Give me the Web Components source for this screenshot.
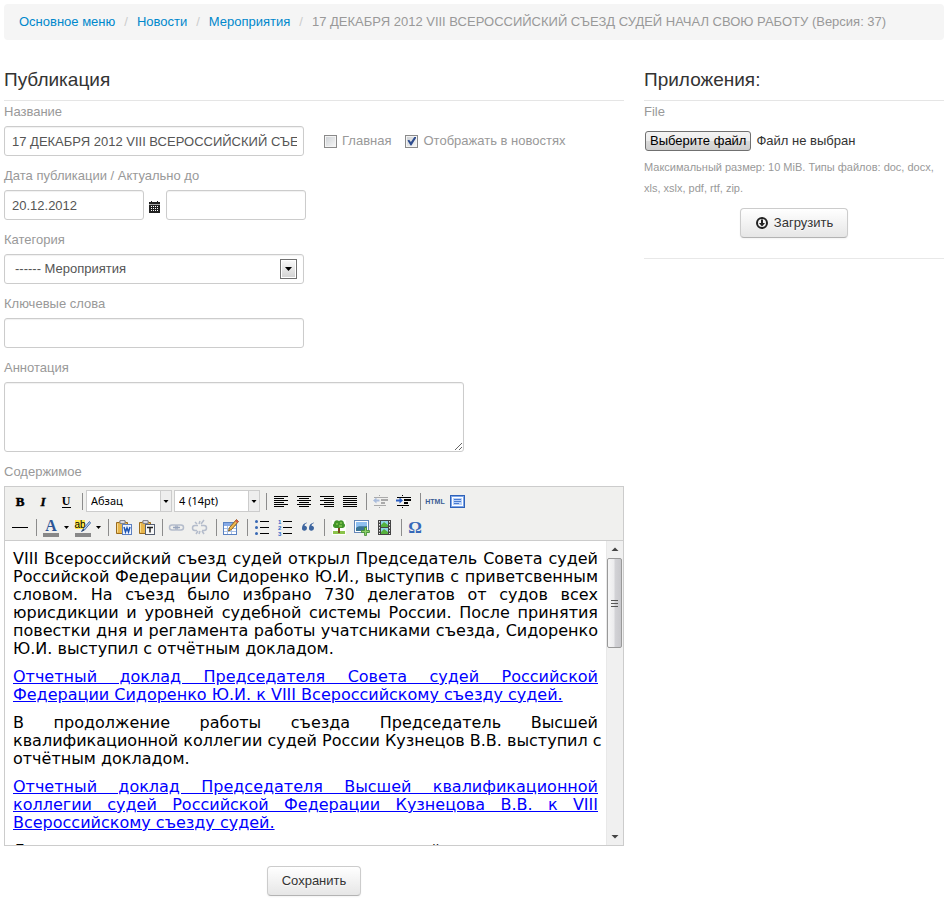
<!DOCTYPE html>
<html lang="ru">
<head>
<meta charset="utf-8">
<title>Публикация</title>
<style>
  body { margin: 0; background: #fff; color: #333; font: 13px/20px "Liberation Sans", Arial, sans-serif; }
</style>
</head>
<body>
<publication-page></publication-page>

<script>
class Base extends HTMLElement {
  connectedCallback() {
    if (this.shadowRoot) return;
    const t = document.createElement('template');
    t.innerHTML = '<style>*{box-sizing:border-box}:host{display:block}</style>' + this.render();
    this.attachShadow({ mode: 'open', delegatesFocus: true }).append(t.content.cloneNode(true));
  }
  a(name, def = '') { return this.getAttribute(name) ?? def; }
}
const define = (name, render) =>
  customElements.define(name, class extends Base { render() { return render(this); } });

const INPUT = `
  font: 13px/20px "Liberation Sans", Arial, sans-serif; color: #555; background: #fff;
  border: 1px solid #ccc; border-radius: 3px; box-shadow: inset 0 1px 1px rgba(0,0,0,.06); outline: 0;`;

/* ---------- toolbar icons, 22 x 22 ---------- */
const bars = (rows, c = '#000') => rows.map(([x, y, w]) => `<rect x="${x}" y="${y}" width="${w}" height="1" fill="${c}"/>`).join('');
const ys = [6, 8, 10, 12, 14, 16];
const serif = 'font-family="Liberation Serif" font-weight="700"';
const clip = `<path d="M4.500 6.500h3l1-2h4l1 2h2v11h-11z" fill="#e8b64c" stroke="#9a6a1c"/><path d="M5.500 7.500v9" stroke="#f8dc95"/><path d="M8 4.500h5v3h-5z" fill="#d8d8e0" stroke="#84848c"/>`;
const dent = (c, b) => bars([[9, 5, 1], [4, 7, 14], [11, 9, 7], [11, 10, 7], [11, 12, 4], [11, 13, 4], [4, 15, 12], [9, 17, 1]], c) + b;
const ICONS = {
  bold: `<text x="11" y="16" text-anchor="middle" font-size="13" ${serif} stroke="#000" stroke-width=".5">B</text>`,
  italic: `<text x="11" y="16" text-anchor="middle" font-size="13" font-style="italic" ${serif} stroke="#000" stroke-width=".4">I</text>`,
  underline: `<text x="11" y="15" text-anchor="middle" font-size="12" ${serif}>U</text><path d="M7 17.500h9" stroke="#000"/>`,
  left: bars(ys.map((y, i) => [4, y, i % 2 ? 10 : 14])),
  center: bars(ys.map((y, i) => i % 2 ? [6, y, 10] : [4, y, 14])),
  right: bars(ys.map((y, i) => i % 2 ? [8, y, 10] : [4, y, 14])),
  full: bars(ys.map(y => [4, y, 14])),
  outdent: dent('#aaa', '<path d="M3 10.500l3.500-3v2h3v2h-3v2z" fill="#a9bcdc"/>'),
  indent: dent('#000', '<path d="M10 10.500l-3.500-3v2H3v2h3.500v2z" fill="#2b5fc4"/>'),
  html: `<text x="11" y="14" text-anchor="middle" font-family="Liberation Sans" font-size="7" font-weight="700" fill="#3b5c94">HTML</text>`,
  fullscreen: `<rect x="3.500" y="5.500" width="14" height="12" fill="#7ea6e8" stroke="#2f62b8"/><rect x="5.500" y="7.500" width="10" height="8" fill="#b9d2fa" stroke="#fff"/><path d="M7 9.500h7M7 11.500h7M7 13.500h5" stroke="#4a7cd0"/>`,
  hr: `<rect x="3" y="11" width="16" height="1"/>`,
  color: `<text x="11" y="15" text-anchor="middle" font-size="16" ${serif} fill="#2d5596">A</text><rect x="3" y="17" width="16" height="4" fill="#888"/>`,
  marker: `<rect x="3" y="4" width="10" height="9" fill="#ffe94a"/><text x="8" y="12" text-anchor="middle" font-family="Liberation Sans" font-size="10">ab</text><path d="M17.500 5.500l-6 7-2 3 3-1.500 6-7z" fill="#b9d2f4" stroke="#4a6fa8"/><path d="M9.500 15.500l3-1.500-1-1z" fill="#234"/><rect x="3" y="17" width="16" height="4" fill="#888"/>`,
  pasteword: clip + `<rect x="10.500" y="8.500" width="9" height="10" fill="#eef4ff" stroke="#5b7fc0"/><path d="M12 11l1.500 5 1.500-4 1.500 4 1.500-5" fill="none" stroke="#1f55b4" stroke-width="1.500"/>`,
  pastetext: clip + `<rect x="10.500" y="8.500" width="9" height="10" fill="#f8f8f8" stroke="#555e70"/><path d="M12 11.500h6M15 11v5.500" stroke="#222" stroke-width="1.500"/>`,
  link: `<g fill="none" stroke="#b4bccb" stroke-width="1.500"><rect x="3.500" y="9" width="8" height="5" rx="2.500"/><rect x="9.500" y="9" width="8" height="5" rx="2.500"/><path d="M7 11.500h7" stroke="#98a5bd"/></g>`,
  unlink: `<g fill="none" stroke="#b4bccb" stroke-width="1.500"><path d="M9 9.500H6a2.500 2.500 0 0 0 0 5h2M12 9.500h3a2.500 2.500 0 0 1 0 5h-2M11 5l-1 3M15 4l-3 4M6 6l2 2M10 18l1-3M7 18l2-3M15 18l-2-3"/></g>`,
  table: `<rect x="3.500" y="6.500" width="13" height="12" fill="#fff" stroke="#5a82c2"/><rect x="4" y="7" width="12" height="3" fill="#86aae6"/><path d="M4 12.500h12M4 15.500h12M7.500 10v8M11.500 10v8" stroke="#a8c0e6"/><path d="M16.500 3.500l2 2-7 8-3 1.500 1-3.500z" fill="#f0b850" stroke="#8a6424"/><path d="M16.500 3.500l2 2-1.500 1.500-2-2z" fill="#d45a48"/>`,
  ul: `<g fill="#3768b4"><circle cx="5.500" cy="5.500" r="1.500"/><circle cx="5.500" cy="11.500" r="1.500"/><circle cx="5.500" cy="17.500" r="1.500"/></g>` + bars([[9, 5, 9], [9, 11, 9], [9, 17, 9]]),
  ol: `<g fill="#2f66c8" font-family="Liberation Sans" font-size="6" font-weight="700"><text x="4" y="8">1</text><text x="4" y="14">2</text><text x="4" y="20">3</text></g>` + bars([[9, 5, 9], [9, 11, 9], [9, 17, 9]]),
  quote: `<g fill="#3d659f"><path d="M10 6.500c-3 .5-5 2.500-5 5.500a2.500 2.500 0 1 0 2.500-2.300c.2-1.300 1-2 2.500-2.700z"/><path d="M17 6.500c-3 .5-5 2.500-5 5.500a2.500 2.500 0 1 0 2.500-2.300c.2-1.300 1-2 2.500-2.700z"/></g>`,
  tree: `<rect x="4" y="4" width="14" height="15" fill="#fdfefb"/><path d="M5 15h12v3H5z" fill="#8bc34a"/><path d="M10 10h2v7h-2z" fill="#7a4a1e"/><path d="M7 12a2.500 2.500 0 0 1-1-4.500A3 3 0 0 1 11 5a3 3 0 0 1 5 2.500A2.500 2.500 0 0 1 15 12z" fill="#43962a"/><path d="M8 8h2M12 7h2M11 10h3" stroke="#a8dc60"/>`,
  image: `<rect x="3.500" y="4.500" width="14" height="12" fill="#fff" stroke="#6688b8"/><rect x="5" y="6" width="11" height="9" fill="#8fc0f0"/><path d="M5 12c3-3 6-1 11-2v5H5z" fill="#3a7596"/><path d="M13.500 11.500h2v3h3v2h-3v3h-2v-3h-3v-2h3z" fill="#8fd068" stroke="#3d8a2c" stroke-width=".8"/>`,
  film: `<rect x="4" y="4" width="13" height="15" fill="#444"/><rect x="7" y="5" width="7" height="6" fill="#8fd4e8"/><rect x="7" y="12" width="7" height="6" fill="#8fd4e8"/><path d="M7 9l3-3 4 3v2H7zM7 16l3-3 4 3v2H7z" fill="#55b03c"/><path d="M5.500 5v13M15.500 5v13" stroke="#e8e8e8" stroke-dasharray="1.500 1.500"/>`,
  omega: `<text x="10" y="17" text-anchor="middle" font-family="Liberation Serif" font-size="17" font-weight="700" fill="#3568b8">Ω</text>`
};

define('tool-button', el => `
  <style>
    button { display: flex; align-items: center; height: 22px; padding: 0; border: 0; background: none; }
    svg { display: block; }
  </style>
  <button type="button" aria-label="${el.a('label')}">
    <svg width="22" height="22">${ICONS[el.a('icon')]}</svg>
    ${el.hasAttribute('split') ? '<svg width="9" height="22"><path d="M2 10h5l-2.500 3z"/></svg>' : ''}
  </button>`);

define('tool-separator', () => `<style>:host { width: 1px; height: 17px; margin: 0 2px 0 4px; background: #8c8c8c; }</style>`);

define('tool-select', el => `
  <style>
    :host { display: grid; width: 86px; height: 22px; }
    select, svg { grid-area: 1 / 1; }
    select { appearance: none; width: 100%; height: 22px; margin: 0; padding: 0 14px 0 4px; border: 1px solid #ccc; border-radius: 0;
      background: #fff; color: #000; font: 11px/18px "Noto Sans", Tahoma, sans-serif; }
    svg { justify-self: end; pointer-events: none; }
  </style>
  <select aria-label="${el.a('label')}"><option>${el.a('value')}</option></select>
  <svg width="12" height="22"><path d="M.500 1v20" stroke="#ccc"/><path d="M1 1h10v20H1z" fill="#eee"/><path d="M3.500 10h5L6 13z"/></svg>`);

define('editor-toolbar', () => {
  const b = ([icon, label, split]) => `<tool-button icon="${icon}" label="${label}" ${split ? 'split' : ''}></tool-button>`;
  const row = groups => `<div>${groups.map(g => typeof g === 'string' ? g : g.map(b).join('')).join('<tool-separator></tool-separator>')}</div>`;
  return `
  <style>
    :host { padding: 1px 4px 0; background: #f0f0ee; border-bottom: 1px solid #ccc; }
    div { display: flex; flex-wrap: wrap; align-items: center; gap: 0 1px; min-height: 26px; }
    tool-select + tool-select { margin: 0 1px; }
  </style>` +
  row([
    [['bold', 'Полужирный'], ['italic', 'Курсив'], ['underline', 'Подчёркнутый']],
    '<tool-select label="Формат" value="Абзац"></tool-select><tool-select label="Размер" value="4 (14pt)"></tool-select>',
    [['left', 'По левому краю'], ['center', 'По центру'], ['right', 'По правому краю'], ['full', 'По ширине']],
    [['outdent', 'Уменьшить отступ'], ['indent', 'Увеличить отступ']],
    [['html', 'Исходный код'], ['fullscreen', 'Полный экран']]
  ]) +
  row([
    [['hr', 'Линия']],
    [['color', 'Цвет текста', 1], ['marker', 'Цвет фона', 1]],
    [['pasteword', 'Вставить из Word'], ['pastetext', 'Вставить как текст']],
    [['link', 'Ссылка'], ['unlink', 'Удалить ссылку']],
    [['table', 'Таблица']],
    [['ul', 'Маркированный список'], ['ol', 'Нумерованный список'], ['quote', 'Цитата']],
    [['tree', 'Изображение'], ['image', 'Добавить изображение'], ['film', 'Видео']],
    [['omega', 'Символ']]
  ]);
});

define('scroll-rail', () => `
  <style>
    :host { display: flex; flex-direction: column; flex: 0 0 17px; background: #f0f0f0; border-left: 1px solid #e8e8e8; }
    svg { display: block; flex: none; }
    .thumb { height: 90px; border: 1px solid #999; border-radius: 2px; margin-right: 1px;
      background: linear-gradient(90deg, #f6f6f6, #ececee 45%, #d2d2d6 55%, #c8c8cc);
      display: flex; flex-direction: column; align-items: center; justify-content: center; gap: 2px; }
    .thumb i { width: 7px; height: 1px; background: #555; }
    .space { flex: 1; }
  </style>
  <svg width="16" height="17"><path d="M4.500 10h7L8 6.500z" fill="#444"/></svg>
  <div class="thumb"><i></i><i></i><i></i></div>
  <div class="space"></div>
  <svg width="16" height="17"><path d="M4.500 7h7L8 10.500z" fill="#444"/></svg>`);

define('rich-editor', () => `
  <style>
    :host { border: 1px solid #ccc; }
    .view { display: flex; height: 304px; }
    .doc { flex: 1; min-width: 0; overflow: auto; scrollbar-width: none; padding: 9px 8px 8px;
      font: 16px/18px "DejaVu Sans", Verdana, sans-serif; color: #000; text-align: justify; }
    ::slotted(p) { margin: 0 0 10px; }
  </style>
  <editor-toolbar></editor-toolbar>
  <div class="view"><div class="doc"><slot></slot></div><scroll-rail></scroll-rail></div>`);

define('bread-crumbs', () => `
  <style>
    :host { padding: 8px 15px; background: #f5f5f5; border-radius: 4px; }
    nav { display: flex; flex-wrap: wrap; color: #999; }
    a { color: #08c; text-decoration: none; }
    i { font-style: normal; color: #ccc; padding: 0 9px; }
  </style>
  <nav><a href="#">Основное меню</a><i>/</i><a href="#">Новости</a><i>/</i><a href="#">Мероприятия</a><i>/</i><span>17 ДЕКАБРЯ 2012 VIII ВСЕРОССИЙСКИЙ СЪЕЗД СУДЕЙ НАЧАЛ СВОЮ РАБОТУ (Версия: 37)</span></nav>`);

define('section-title', () => `
  <style>
    :host { border-bottom: 1px solid #e5e5e5; }
    h2 { margin: 0; font: 19px/40px "Liberation Sans", Arial, sans-serif; color: #333; }
  </style><h2><slot></slot></h2>`);

define('form-field', el => {
  const kind = el.a('kind', 'text'), v = el.a('value');
  const control = {
    text: `<input id="c" type="text" value="${v}">`,
    area: `<textarea id="c"></textarea>`,
    select: `<div class="select"><select id="c"><option>${v}</option></select>
      <svg width="17" height="20"><defs><linearGradient id="g" x2="0" y2="1"><stop stop-color="#f8f8f8"/><stop offset="1" stop-color="#d4d4d4"/></linearGradient></defs><rect x=".5" y=".5" width="16" height="19" fill="#fff" stroke="#707070"/><rect x="2" y="2" width="13" height="16" fill="url(#g)"/><path d="M5 8h7l-3.500 4z"/></svg></div>`,
    dates: `<input id="c" type="text" value="${v}">
      <svg class="cal" width="11" height="12"><path d="M0 1h2V0h1v1h5V0h1v1h2v11H0z" fill="#222"/><path d="M0 3.500h11" stroke="#aaa"/><path d="M2 5.500h8M2 7.500h8M2 9.500h8" stroke="#fff" stroke-dasharray="1 1"/></svg>
      <input type="text" aria-label="Актуально до">`,
    custom: ''
  }[kind];
  return `
  <style>
    label { display: block; color: #999; margin-bottom: 4px; }
    .row { display: flex; align-items: center; }
    input, textarea, select { ${INPUT} width: var(--w, 300px); max-width: 100%; height: 30px; margin: 0; padding: 4px 6px 4px 7px; }
    textarea { display: block; height: 70px; }
    .select { display: grid; width: 300px; align-items: center; }
    .select > * { grid-area: 1 / 1; }
    select { appearance: none; width: 100%; padding: 0 30px 0 10px; }
    .select svg { justify-self: end; margin-right: 7px; pointer-events: none; }
    .cal { margin: 4px 6px 0 5px; }
  </style>
  <label for="c">${el.a('label')}</label>
  <div class="row">${control}<slot></slot></div>`;
});

define('check-box', el => `
  <style>
    label { display: flex; align-items: center; gap: 5px; color: #999; }
    input { appearance: none; flex: none; width: 13px; height: 13px; margin: 0; border: 1px solid #8a8a8a;
      background: linear-gradient(135deg, #ccd0d4, #f8f8f8); box-shadow: inset 0 0 0 1px #f4f4f4; display: grid; place-items: center; }
    input:checked::after { content: ""; width: 9px; height: 9px; background: #2f4d8f;
      clip-path: polygon(0 45%, 18% 35%, 38% 62%, 80% 0, 100% 8%, 44% 100%, 34% 100%); }
  </style>
  <label><input type="checkbox" ${el.hasAttribute('checked') ? 'checked' : ''}><slot></slot></label>`);

define('push-button', el => `
  <style>
    :host { display: flex; justify-content: center; }
    button { display: flex; align-items: center; gap: 5px; height: 30px; margin: 0; padding: 0 14px; border: 1px solid #ccc; border-bottom-color: #b3b3b3;
      border-radius: 4px; background: linear-gradient(#fff, #e6e6e6); box-shadow: 0 1px 2px rgba(0,0,0,.05);
      color: #333; font: 13px/20px "Liberation Sans", Arial, sans-serif; text-shadow: 0 1px 1px rgba(255,255,255,.75); }
    svg { display: block; }
  </style>
  <button type="button">${el.hasAttribute('download') ? '<svg width="14" height="14"><circle cx="7" cy="7" r="5" fill="none" stroke="#222" stroke-width="2"/><path d="M6 3.500h2V7h2l-3 3.500L4 7h2z" fill="#222"/></svg>' : ''}<slot></slot></button>`);

define('file-picker', () => `
  <style>
    .title { display: block; color: #999; }
    .row { display: flex; align-items: center; gap: 5px; margin: 9px 0 6px 1px; position: relative; }
    input { position: absolute; inset: 0; opacity: 0; width: 100%; margin: 0; }
    .pick { height: 20px; padding: 0 4px; border: 1px solid #707070; border-radius: 3px; color: #000; line-height: 18px;
      background: linear-gradient(#f4f4f4, #ececec 48%, #dadada 52%, #cecece); }
    p { margin: 0; color: #999; font-size: 11px; line-height: 21px; }
  </style>
  <label class="title" for="f">File</label>
  <div class="row"><span class="pick">Выберите файл</span><span>Файл не выбран</span><input id="f" type="file"></div>
  <p>Максимальный размер: 10 MiB. Типы файлов: doc, docx, xls, xslx, pdf, rtf, zip.</p>`);

define('publication-page', () => `
  <style>
    :host { padding: 4px 1px 4px 4px; }
    main { display: grid; grid-template-columns: minmax(0, 31fr) minmax(0, 15fr); gap: 20px; margin-top: 20px; align-items: start; }
    form { display: grid; grid-template-columns: minmax(0, 1fr); gap: 10px; }
    section-title { margin-bottom: -9px; }
    aside section-title { margin-bottom: 1px; }
    check-box { margin-left: 20px; }
    check-box + check-box { margin-left: 14px; }
    .dates { --w: 140px; }
    .area { --w: 460px; }
    rich-editor { margin-top: -10px; }
    form push-button { margin-top: 10px; }
    aside push-button { margin: 9px 0 20px; }
    hr { margin: 0; border: 0; border-top: 1px solid #e8e8e8; }
    rich-editor a { color: #00f; text-decoration: underline; }
    .keep { white-space: nowrap; }
  </style>
  <bread-crumbs></bread-crumbs>
  <main>
    <form>
      <section-title>Публикация</section-title>
      <form-field label="Название" value="17 ДЕКАБРЯ 2012 VIII ВСЕРОССИЙСКИЙ СЪЕЗД СУДЕЙ НАЧАЛ СВОЮ РАБОТУ">
        <check-box>Главная</check-box><check-box checked>Отображать в новостях</check-box>
      </form-field>
      <form-field class="dates" kind="dates" label="Дата публикации / Актуально до" value="20.12.2012"></form-field>
      <form-field kind="select" label="Категория" value="------ Мероприятия"></form-field>
      <form-field label="Ключевые слова"></form-field>
      <form-field class="area" kind="area" label="Аннотация"></form-field>
      <form-field kind="custom" label="Содержимое"></form-field>
      <rich-editor>
        <p>VIII Всероссийский съезд судей открыл Председатель Совета судей Российской Федерации Сидоренко Ю.И., выступив с приветсвенным словом. На съезд было избрано 730 делегатов от судов всех юрисдикции и уровней судебной системы России. После принятия повестки дня и регламента работы учатсниками съезда, Сидоренко Ю.И. выступил с отчётным докладом.</p>
        <p><a href="#">Отчетный доклад Председателя Совета судей Российской Федерации Сидоренко Ю.И. к VIII Всероссийскому съезду судей.</a></p>
        <p>В продолжение работы съезда Председатель Высшей <span class="keep">квалификационной коллегии судей России Кузнецов В.В. выступил с</span> отчётным докладом.</p>
        <p><a href="#">Отчетный доклад Председателя Высшей квалификационной коллегии судей Российской Федерации Кузнецова В.В. к VIII Всероссийскому съезду судей.</a></p>
        <p>Далее с докладом на съезде и от имени комиссий</p>
      </rich-editor>
      <push-button>Сохранить</push-button>
    </form>
    <aside>
      <section-title>Приложения:</section-title>
      <file-picker></file-picker>
      <push-button download>Загрузить</push-button>
      <hr>
    </aside>
  </main>`);
</script>
</body>
</html>
